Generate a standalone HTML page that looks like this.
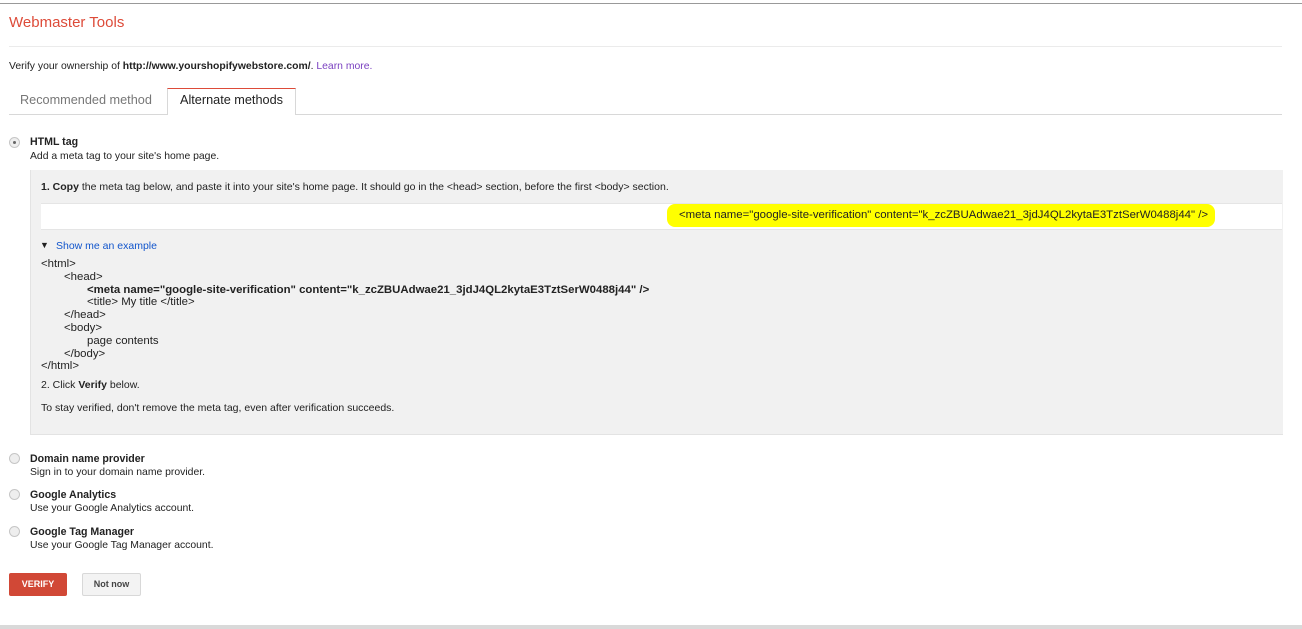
<!DOCTYPE html>
<html><head><meta charset="utf-8"><style>
body{margin:0;width:1302px;height:629px;background:#fff;font-family:"Liberation Sans",Arial,sans-serif;font-size:11px;color:#222;position:relative;overflow:hidden}
.a{position:absolute;white-space:nowrap}
b{font-weight:bold}
.radio{position:absolute;width:9px;height:9px;border-radius:50%;border:1px solid #c6c6c6;background:#eee}
.code{line-height:12.8px;font-size:11.4px}
</style></head><body>
<div class="a" style="left:0;top:3px;width:1302px;height:1px;background:#999"></div>
<div class="a" style="left:9px;top:14px;font-size:15px;color:#dd4b39">Webmaster Tools</div>
<div class="a" style="left:9px;top:46px;width:1273px;height:1px;background:#ebebeb"></div>
<div class="a" style="left:9px;top:61px;font-size:10.4px">Verify your ownership of <b>http://www.yourshopifywebstore.com/</b>. <span style="color:#7a40c0">Learn more.</span></div>
<div class="a" style="left:9px;top:114px;width:1273px;height:1px;background:#d8d8d8"></div>
<div class="a" style="left:20px;top:93px;font-size:12.7px;color:#777">Recommended method</div>
<div class="a" style="left:167px;top:88px;width:127px;height:26px;background:#fff;border:1px solid #d8d8d8;border-top:1px solid #dd4b39;border-bottom:none"></div>
<div class="a" style="left:180px;top:93px;font-size:12.7px;color:#222">Alternate methods</div>
<div class="radio" style="left:9px;top:137px;background:#eee"><div style="position:absolute;left:3px;top:3px;width:3px;height:3px;border-radius:50%;background:#666"></div></div>
<div class="a" style="left:30px;top:136px;font-size:10.6px"><b>HTML tag</b></div>
<div class="a" style="left:30px;top:151px;font-size:10.4px">Add a meta tag to your site's home page.</div>
<div class="a" style="left:30px;top:170px;width:1252px;height:264px;background:#f1f1f1;border-left:1px solid #e3e3e3;border-bottom:1px solid #e3e3e3"></div>
<div class="a" style="left:41px;top:181px;font-size:10.5px"><b>1. Copy</b> the meta tag below, and paste it into your site's home page. It should go in the &lt;head&gt; section, before the first &lt;body&gt; section.</div>
<div class="a" style="left:41px;top:203px;width:1241px;height:25px;background:#fff;border-top:1px solid #e5e5e5;border-bottom:1px solid #e5e5e5"></div>
<div class="a" style="left:667px;top:204px;width:548px;height:23px;background:#ffff00;border-radius:8px"></div>
<div class="a" style="left:679px;top:209px;font-size:11.4px">&lt;meta name="google-site-verification" content="k_zcZBUAdwae21_3jdJ4QL2kytaE3TztSerW0488j44" /&gt;</div>
<div class="a" style="left:40px;top:240px;font-size:9px">▼</div>
<div class="a" style="left:56px;top:240px;font-size:10.5px;color:#1155cc">Show me an example</div>
<div class="a code" style="left:41px;top:258px">&lt;html&gt;<br><span style="padding-left:23px">&lt;head&gt;</span><br><b style="padding-left:46px">&lt;meta name="google-site-verification" content="k_zcZBUAdwae21_3jdJ4QL2kytaE3TztSerW0488j44" /&gt;</b><br><span style="padding-left:46px">&lt;title&gt; My title &lt;/title&gt;</span><br><span style="padding-left:23px">&lt;/head&gt;</span><br><span style="padding-left:23px">&lt;body&gt;</span><br><span style="padding-left:46px">page contents</span><br><span style="padding-left:23px">&lt;/body&gt;</span><br>&lt;/html&gt;</div>
<div class="a" style="left:41px;top:379px;font-size:10.5px">2. Click <b>Verify</b> below.</div>
<div class="a" style="left:41px;top:402px;font-size:10.5px">To stay verified, don't remove the meta tag, even after verification succeeds.</div>
<div class="radio" style="left:9px;top:453px"></div>
<div class="a" style="left:30px;top:453px;font-size:10.6px"><b>Domain name provider</b></div>
<div class="a" style="left:30px;top:467px;font-size:10.4px">Sign in to your domain name provider.</div>
<div class="radio" style="left:9px;top:489px"></div>
<div class="a" style="left:30px;top:489px;font-size:10.6px"><b>Google Analytics</b></div>
<div class="a" style="left:30px;top:503px;font-size:10.4px">Use your Google Analytics account.</div>
<div class="radio" style="left:9px;top:526px"></div>
<div class="a" style="left:30px;top:526px;font-size:10.6px"><b>Google Tag Manager</b></div>
<div class="a" style="left:30px;top:540px;font-size:10.4px">Use your Google Tag Manager account.</div>
<div class="a" style="left:9px;top:573px;width:58px;height:23px;background:#d14836;border-radius:2px;color:#fff;font-size:9px;font-weight:bold;text-align:center;line-height:23px">VERIFY</div>
<div class="a" style="left:82px;top:573px;width:57px;height:21px;background:#f3f3f3;border:1px solid #d8d8d8;border-radius:2px;color:#444;font-size:9px;font-weight:bold;text-align:center;line-height:21px">Not now</div>
<div class="a" style="left:0;top:625px;width:1302px;height:4px;background:#d9d9d9"></div>
</body></html>
